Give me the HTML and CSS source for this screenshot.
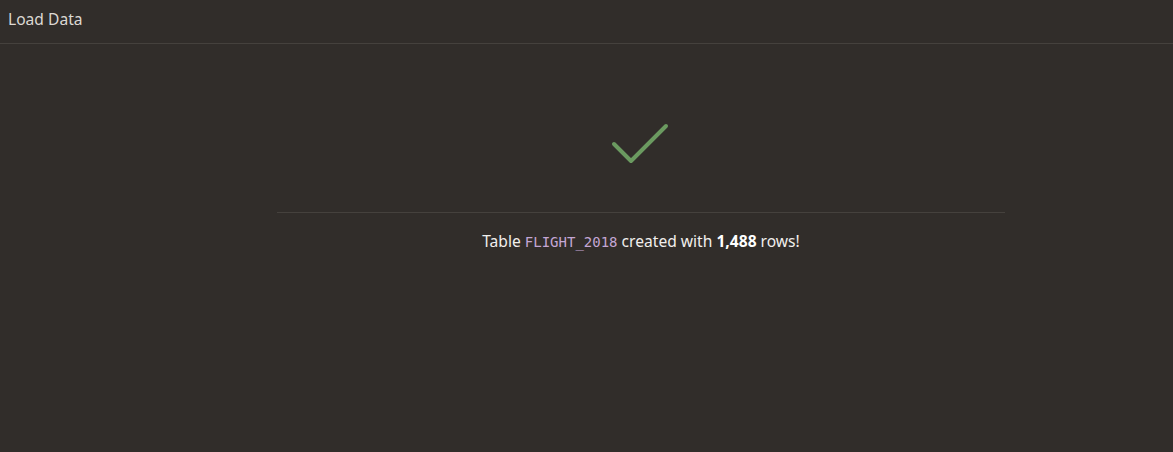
FILE: index.html
```html
<!DOCTYPE html>
<html>
<head>
<meta charset="utf-8">
<link rel="stylesheet" href="styles.css">
</head>
<body>
<header class="header">Load Data</header>
<main class="content">
  <div class="result">
    <div class="icon">
      <svg width="60" height="44" viewBox="0 0 60 44">
        <polyline points="3,22 20,39 55,4" fill="none" stroke="#6b9a60" stroke-width="4" stroke-linecap="round" stroke-linejoin="round"/>
      </svg>
    </div>
    <div class="divider"></div>
    <p class="message">Table <code class="name">FLIGHT_2018</code> created with <strong>1,488</strong> rows!</p>
  </div>
</main>
</body>
</html>
```

FILE: styles.css
```css
html, body {
  margin: 0;
  padding: 0;
  background: #312d2a;
  height: 100%;
}
body {
  font-family: "Noto Sans", "Open Sans", sans-serif;
  color: #f1efed;
}
.header {
  height: 44px;
  box-sizing: border-box;
  padding: 8px 8px 0;
  font-size: 15.6px;
  color: #dcd8d3;
  border-bottom: 1px solid #45413d;
}
.content {
  padding-left: 277px;
}
.result {
  width: 728px;
  display: flex;
  flex-direction: column;
  align-items: center;
}
.icon {
  margin-top: 78px;
  height: 44px;
}
.icon svg { display: block; }
.divider {
  align-self: stretch;
  height: 1px;
  background: #45413d;
  margin-top: 46px;
}
.message {
  margin: 16px 0 0;
  font-size: 15.6px;
  line-height: 24px;
}
.name {
  font-family: "DejaVu Sans Mono", "Liberation Mono", monospace;
  font-size: 14px;
  color: #c4a6d4;
}
strong { font-weight: 700; color: #ffffff; }
```
